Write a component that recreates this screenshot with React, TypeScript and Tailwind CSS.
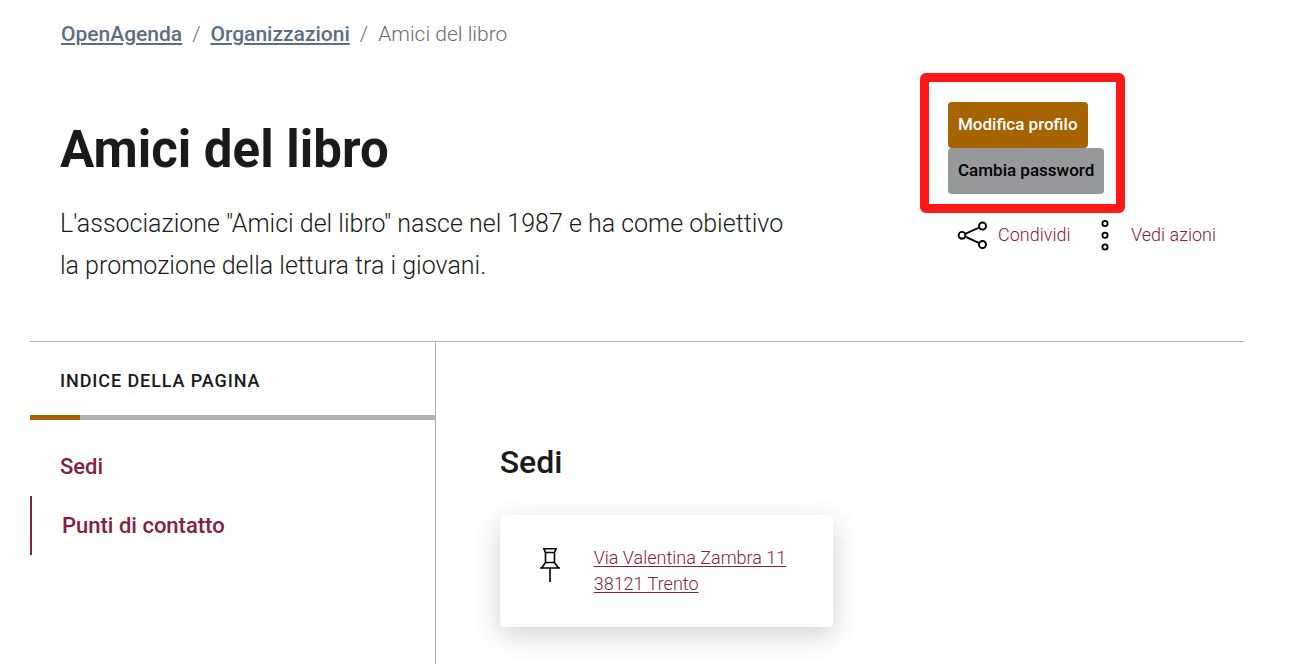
import React from 'react';

const ShareIcon: React.FC = () => (
  <svg
    className="h-8 w-8"
    viewBox="0 0 32 32"
    fill="none"
    stroke="#000"
    strokeWidth="1.9"
    aria-hidden="true"
  >
    <circle cx="6" cy="16.3" r="3.4" />
    <circle cx="26.5" cy="7" r="3.5" />
    <circle cx="26.5" cy="25.5" r="3.5" />
    <path d="M9.2 14.9 23.2 8.5M9.2 17.7 23.2 24.1" />
  </svg>
);

const MoreIcon: React.FC = () => (
  <svg
    className="h-8 w-8"
    viewBox="0 0 32 32"
    fill="none"
    stroke="#000"
    strokeWidth="1.8"
    aria-hidden="true"
  >
    <circle cx="16" cy="4.5" r="2.6" />
    <circle cx="16" cy="16.3" r="2.6" />
    <circle cx="16" cy="28" r="2.6" />
  </svg>
);

const PinIcon: React.FC = () => (
  <svg
    className="mt-0.5 h-9 w-6 shrink-0"
    viewBox="0 0 24 36"
    fill="none"
    stroke="#000"
    strokeWidth="1.6"
    aria-hidden="true"
  >
    <path d="M5 1.8h14M6 1.8 7.3 5.5h9.4L18 1.8M7.5 5.5v10M16.5 5.5v10M7.5 15.5h9M7.5 15.5 3.6 21h16.8l-3.9-5.5M2 21h20M12 21v14" />
  </svg>
);

const Breadcrumb: React.FC = () => (
  <nav aria-label="Percorso" className="px-[31px] pt-4">
    <ol className="flex flex-wrap gap-[10px] text-[21px] leading-9 text-[#6b6b6b]">
      <li>
        <a href="#" className="font-medium text-[#5b6f82] underline underline-offset-2">
          OpenAgenda
        </a>
      </li>
      <li aria-hidden="true" className="font-light">/</li>
      <li>
        <a href="#" className="font-medium text-[#5b6f82] underline underline-offset-2">
          Organizzazioni
        </a>
      </li>
      <li aria-hidden="true" className="font-light">/</li>
      <li className="font-light">Amici del libro</li>
    </ol>
  </nav>
);

const Actions: React.FC = () => (
  <div className="mr-7 w-[296px] shrink-0 pt-[21px]">
    <div className="flex w-fit flex-col items-start rounded-md border-[9px] border-[#ff1616] pt-5 pr-3 pb-[10px] pl-[19px]">
      <button
        type="button"
        className="h-[46px] rounded bg-[#a66300] px-[10px] text-[17px] font-medium text-white"
      >
        Modifica profilo
      </button>
      <button
        type="button"
        className="h-[46px] rounded bg-[#97989a] px-[10px] text-[17px] font-medium text-black"
      >
        Cambia password
      </button>
    </div>
    <div className="flex items-center justify-between pt-[6px] pl-9 text-lg leading-8 font-light text-[#83213f]">
      <button type="button" className="flex items-center gap-[10px]">
        <ShareIcon />
        Condividi
      </button>
      <button type="button" className="flex items-center gap-[10px]">
        <MoreIcon />
        Vedi azioni
      </button>
    </div>
  </div>
);

const PageIndex: React.FC = () => (
  <aside className="box-content w-1/3 border-r border-[#b1b1b3]">
    <h2 className="px-[30px] pt-[27px] pb-[22px] text-lg leading-6 font-medium tracking-wider uppercase">
      Indice della pagina
    </h2>
    <div className="h-[5px] bg-[#b1b1b3]">
      <div className="h-full w-[50px] bg-[#a66300]" />
    </div>
    <ul className="pt-[17px] text-[22px] font-medium text-[#83213f]">
      <li>
        <a href="#sedi" className="block px-[30px] leading-[59px]">
          Sedi
        </a>
      </li>
      <li>
        <a href="#contatti" className="block border-l-2 border-[#83213f] px-[30px] leading-[59px]">
          Punti di contatto
        </a>
      </li>
    </ul>
  </aside>
);

const App: React.FC = () => {
  return (
    <div className="flex min-h-screen flex-col bg-white pr-12 pl-[30px] font-[Roboto,sans-serif] text-[#1a1a1a]">
      <Breadcrumb />
      <header className="flex justify-between pb-[54px]">
        <div className="max-w-[800px] px-[30px] pt-[62px]">
          <h1 className="text-[51px] leading-[72px] font-bold">Amici del libro</h1>
          <p className="pt-[17px] text-[25px] leading-[42px] font-light">
            L'associazione "Amici del libro" nasce nel 1987 e ha come obiettivo la promozione della
            lettura tra i giovani.
          </p>
        </div>
        <Actions />
      </header>
      <div className="flex flex-1 border-t border-[#b1b1b3]">
        <PageIndex />
        <main className="flex-1 pt-24 pl-16">
          <h2 id="sedi" className="text-[32px] leading-[48px] font-medium">
            Sedi
          </h2>
          <address className="mt-[29px] flex max-w-[333px] gap-8 rounded bg-white py-[30px] pl-[38px] not-italic shadow-[0_8px_28px_rgba(0,0,0,0.18)]">
            <PinIcon />
            <a
              href="#"
              className="text-lg leading-[26px] font-light text-[#83213f] underline underline-offset-2"
            >
              Via Valentina Zambra 11
              <br />
              38121 Trento
            </a>
          </address>
        </main>
      </div>
    </div>
  );
};

export default App;
